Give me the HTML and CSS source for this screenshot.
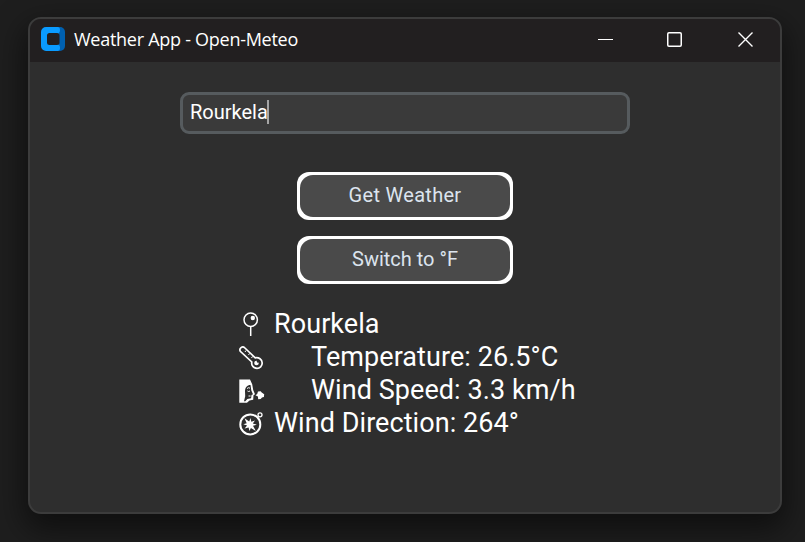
FILE: index.html
```html
<!DOCTYPE html>
<html lang="en">
<head>
<meta charset="utf-8">
<title>Weather App - Open-Meteo</title>
<link rel="stylesheet" href="styles.css">
</head>
<body>
<div class="window">
  <header class="titlebar">
    <svg class="logo" width="24" height="24" viewBox="0 0 24 24">
      <rect x="8" width="16" height="24" rx="5" fill="#0060b0"/>
      <path d="M5 0H16.500q2.500 0 2.500 3t-1.500 3.500V18q1.500 0 1.500 3t-2.500 3H5a5 5 0 0 1-5-5V5a5 5 0 0 1 5-5z" fill="#0a9bff"/>
      <rect x="6" y="6" width="12.500" height="12" rx="2.500" fill="#221f20"/>
    </svg>
    <span class="title">Weather App - Open-Meteo</span>
    <div class="controls">
      <svg width="16" height="16" viewBox="0 0 16 16"><path d="M0 7.500H15" stroke="#fff"/></svg>
      <svg class="maximize" width="16" height="16" viewBox="0 0 16 16"><rect x=".75" y=".75" width="13.500" height="13.500" rx="1.200" fill="none" stroke="#fff" stroke-width="1.500"/></svg>
      <svg width="16" height="16" viewBox="0 0 16 16"><path d="M.5.5l14 14M14.500.5l-14 14" stroke="#fff" stroke-width="1.400"/></svg>
    </div>
  </header>
  <main class="content">
    <div class="entry"><span>Rourkela</span><i class="caret"></i></div>
    <button class="button"><span>Get Weather</span></button>
    <button class="button tight"><span>Switch to °F</span></button>
    <div class="result">
      <div class="row">
        <svg class="icon" width="28" height="33" viewBox="0 0 28 33">
          <circle cx="12.700" cy="11.700" r="6.700" fill="none" stroke="#fff" stroke-width="1.500"/>
          <circle cx="14.800" cy="10" r="2.200" fill="#fff"/>
          <path d="M12.700 18.500V28" stroke="#fff" stroke-width="1.500"/>
        </svg>
        <span class="text">Rourkela</span>
      </div>
      <div class="row wide">
        <svg class="icon" width="28" height="33" viewBox="0 0 28 33">
          <path d="M2.300 10.300C.8 7.500 4.300 4.500 6.900 7l10.300 9.800c3.500-.7 7 1.600 7 5.200 0 3-2.400 5.300-5.200 5.300-3.400 0-5.900-3-5.200-6.300z" fill="none" stroke="#fff" stroke-width="1.700"/>
          <path d="M8 9.500l-1 1.500M11.500 12.500l-1 1.500M14.500 15.500l-1 1.500" stroke="#fff"/>
          <circle cx="18.500" cy="22" r="2.300" fill="#fff"/>
          <circle cx="20" cy="20.500" r="1.200" fill="#2e2e2e"/>
        </svg>
        <span class="text">Temperature: 26.5°C</span>
      </div>
      <div class="row wide">
        <svg class="icon" width="28" height="33" viewBox="0 0 28 33">
          <path d="M1.300 5.500H12l2.200 4.800 1 5.700 1.800 4.200-1.500 1-.3 4.500-3.700.7-2.500 2.300H1.300z" fill="#fff"/>
          <path d="M12.500 11l.8 5.500 1.700 3.700-1.500.8-.4 3.200-3.800.8-2 2.200H6l1.200-5-.2-5.200c.2-3.500 2-6 5.500-6z" fill="#2e2e2e"/>
          <path d="M9 14.500q1.700-1.500 3-.3M9.500 17q1 1 2.500 0M10.500 22h2" fill="none" stroke="#fff"/>
          <path d="M17.500 21.300l1.700-1.300.8-2.500 2.700-.2 1 1.300 2.500 1.700-.3 2.700-1.900.4-1.300 1.700-2.500.1-.3-2.600z" fill="#fff"/>
        </svg>
        <span class="text">Wind Speed: 3.3 km/h</span>
      </div>
      <div class="row">
        <svg class="icon" width="28" height="33" viewBox="0 0 28 33">
          <circle cx="12.300" cy="17.400" r="10" fill="none" stroke="#fff" stroke-width="2"/>
          <path d="M6.500 11.200l4.700 3.300 1.300-3.500.8 3.700 3.700-1.200-2.200 3 4 1.200-3.800 1 2.800 5.200-4.900-3-1.400 3.200-.9-3.600-4 .9 2.500-3-3.800-1.100 3.400-1z" fill="#fff"/>
          <circle cx="22" cy="7.800" r="2" fill="none" stroke="#fff" stroke-width="1.300"/>
        </svg>
        <span class="text">Wind Direction: 264°</span>
      </div>
    </div>
  </main>
</div>
</body>
</html>
```
FILE: styles.css
```css
* { box-sizing: border-box; }
body {
  margin: 0;
  height: 542px;
  padding: 17px 23px 28px 28px;
  overflow: hidden;
  background: #1e1e1e;
  font-family: Roboto, "Liberation Sans", sans-serif;
}
.window {
  height: 497px;
  border: 2px solid #3c3c3c;
  border-radius: 13px;
  background: #2e2e2e;
  box-shadow: 0 12px 30px 4px rgba(0, 0, 0, .5);
  overflow: hidden;
}
.titlebar {
  height: 43px;
  display: flex;
  align-items: center;
  padding: 0 26px 0 11px;
  background: #221f20;
}
.logo { margin-bottom: 3px; }
.title {
  margin: 0 0 4px 9px;
  color: #fff;
  font: 18px/24px "Open Sans", sans-serif;
  letter-spacing: -.27px;
}
.controls {
  display: flex;
  gap: 54px;
  margin-left: auto;
  padding-bottom: 1px;
}
.maximize { margin: 0 1px 0 -1px; }
.content {
  display: flex;
  flex-direction: column;
  align-items: center;
  padding-top: 30px;
}
.entry {
  display: flex;
  width: 450px;
  height: 42px;
  margin-bottom: 38px;
  padding: 5px 7px;
  border: 3px solid #565b5e;
  border-radius: 9px;
  background: #3a3a3a;
  color: #fff;
  font-size: 20px;
  line-height: 24px;
}
.caret {
  width: 2px;
  height: 24px;
  margin-left: -1px;
  background: #a5a5a5;
}
.button {
  display: flex;
  width: 216px;
  height: 48px;
  margin-bottom: 16px;
  padding: 3px;
  border: 0;
  border-radius: 12px;
  background: #fff;
  color: #dce4ee;
  font: 20px/40px Roboto, sans-serif;
  letter-spacing: .3px;
}
.button span {
  flex: 1;
  height: 42px;
  border-radius: 13px;
  background: #4a4a4a;
}
.tight { letter-spacing: 0; }
.result {
  width: 336px;
  margin: 8px 0 0 2px;
  color: #fff;
  font-size: 27px;
  line-height: 33px;
  letter-spacing: .07px;
}
.row { display: flex; height: 33px; }
.icon {
  flex-shrink: 0;
  margin-right: 8px;
}
.wide .icon { margin-right: 45px; }
.text { white-space: nowrap; }
```
